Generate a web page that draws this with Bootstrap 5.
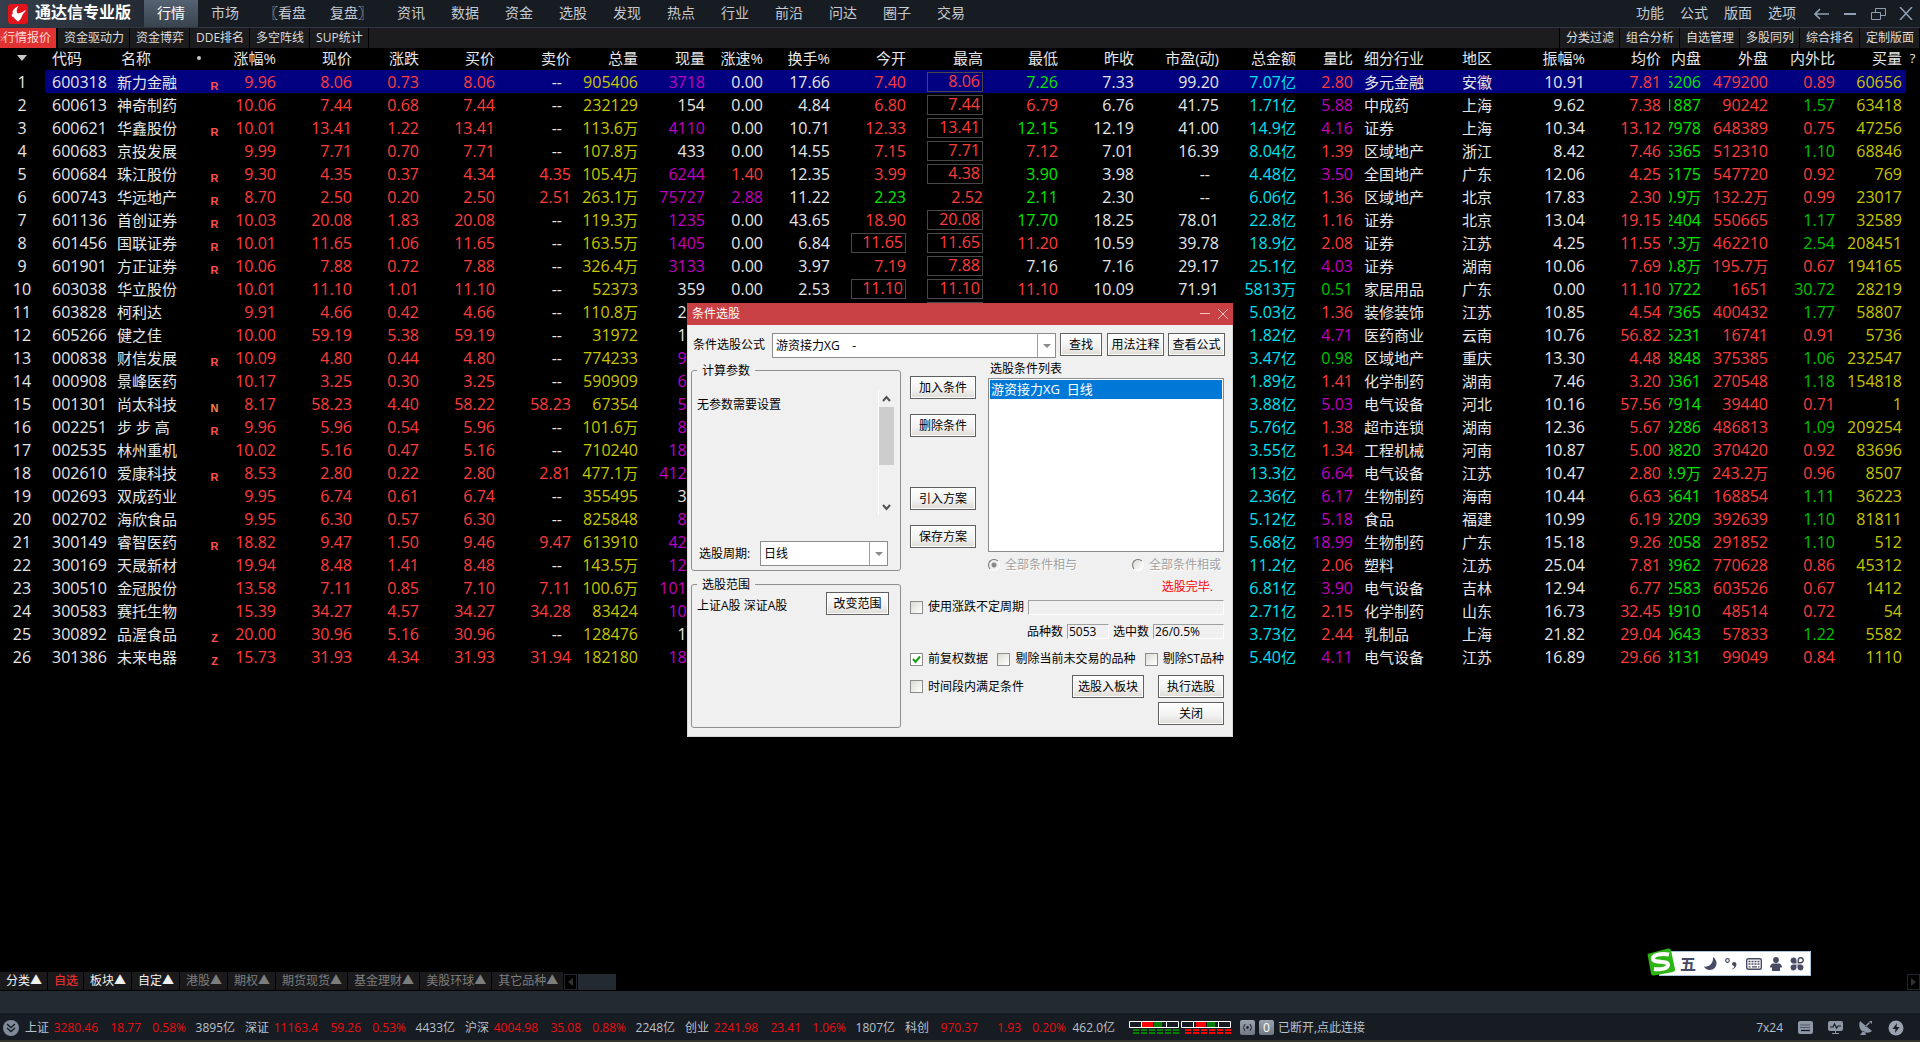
<!DOCTYPE html>
<html lang="zh-CN">
<head>
<meta charset="utf-8">
<meta name="viewport" content="width=device-width, initial-scale=1">
<title>通达信专业版</title>
<link href="https://cdn.jsdelivr.net/npm/bootstrap@5.3.0/dist/css/bootstrap.min.css" rel="stylesheet">
<script src="https://cdn.jsdelivr.net/npm/bootstrap@5.3.0/dist/js/bootstrap.bundle.min.js"></script>
<style>
:root{--up:#ff3c3c;--down:#00e600;--chrome:#171b22;--band:#242a32}
body{background:#000;color:#e6e6e6;font:12px/16px "Open Sans","Noto Sans CJK SC",sans-serif;overflow:hidden}
button,input,select{font:inherit;color:inherit}
svg{display:block;flex:none}

/* title bar */
.topbar{height:28px;background:var(--chrome);border-bottom:1px solid #2f3844;font-size:14px;color:#c4cad2}
.brand{width:144px;padding-left:8px;gap:7px;background:linear-gradient(90deg,#353e4a,#232a33);color:#fff;font-size:16px;font-weight:700}
.brand span{margin-top:-4px}
.menu-link{min-width:54px;padding:0 12px 2px;display:flex;align-items:center;justify-content:center;color:#c4cad2;text-decoration:none;white-space:nowrap}
.menu-link.on{background:linear-gradient(#556272,#39434f);color:#fff}
.menu-end .menu-link{min-width:44px;padding:0 8px 2px}
.winbtn{border:0;background:none;padding:0;width:28px;display:flex;align-items:center;justify-content:center}

/* view tabs */
.viewbar{height:20px;background:#1c1c1e}
.view-link{padding:0 5px 0 6px;border-right:1px solid #000;color:#dcdcdc;text-decoration:none;line-height:20px;white-space:nowrap}
.view-link.on{background:#e03232;color:#ffd9d9;border-right:2px solid #000;padding:0 5px 0 0}
.view-first{border-left:1px solid #000}
.chev{margin-right:-3px;opacity:.45}

/* quotes */
.quotes{width:100%;table-layout:fixed;border-collapse:collapse;font-size:16px;line-height:22px;white-space:nowrap}
.quotes td,.quotes th{padding:0 1px 0 0;height:23px;font-weight:400;text-align:right}
.quotes th{font-size:15px;height:22px;line-height:18px;padding-bottom:2px}
.quotes .txt{font-size:15px;text-align:left;padding-left:7px}
.quotes .fs-code{font-size:16px}
.quotes .pad10{padding-left:10px}
.quotes .ctr{text-align:center}
.quotes .help{font-size:13px}
.quotes .cjk{font-size:15px}
.quotes .dash{padding-right:10px}
.quotes .buy{padding-right:4px}
.quotes .flag{font:700 11px/12px "Liberation Sans",sans-serif;color:#ff5050;text-align:center;vertical-align:bottom;padding:0 0 1px 1px}
.quotes .flag.n{color:#ff8040}
.quotes .sel td{background:#000080}
.quotes .sel td:first-child,.quotes .sel td:last-child{background:none}
.inn span{white-space:nowrap}
.inn>span{display:flex;justify-content:flex-end;overflow:hidden;margin-left:7px}
.inn bdi{flex:none}
.limit{display:block;margin-left:20px;border:1px solid #484848;height:20px;line-height:17px;padding-right:2px}
.up{color:var(--up)}.down{color:var(--down)}.dim-down{color:#00c400}.vol{color:#c6c600}.big{color:#c000c0}.amt{color:#00e0f0}

/* bottom */
.sheetbar{height:18px;gap:1px}
.sheet-link{background:#1a1a1c;color:#7d7d7d;padding:0 5px 0 6px;line-height:18px;text-decoration:none;white-space:nowrap}
.sheet-link.w{color:#f0f0f0}
.sheet-link.on{color:#ff3030}
.scrollbtn{width:13px;height:16px;border:1px solid #22262c;background:#000;padding:0;display:flex;align-items:center;justify-content:center}
.scrollthumb{width:38px;height:16px;background:var(--band)}
.band{height:22px;background:var(--band);margin-top:1px}
.status{height:27px;background:var(--chrome);color:#b9c2cc;padding:2px 0 0 3px;white-space:nowrap}
.more{margin-right:6px}
.ix{width:220px;padding-right:10px}
.ix b{font-weight:400;color:#e81010;text-align:right}
.ix .v1,.ix .v4{width:49px;text-align:right}.ix .v2{width:43px}.ix .v3{width:45px}
.tools{gap:15px}
.desk{height:2px;background:#33352a}
.chip{background:linear-gradient(#9aa3af,#6f7884);border-radius:2px;width:15px;height:15px;display:flex;align-items:center;justify-content:center;color:#fff}

/* input-method bar */
.ime{position:absolute;right:109px;bottom:66px;height:25px;width:164px;color:#474b63}
.ime-body{background:#fff;border:1px solid #a9c4dc;margin-left:12px;padding:0 6px 0 20px;font-size:16px}
.ime-logo{position:absolute;left:0;bottom:0}

/* selection dialog */
.dlg{position:absolute;left:0;right:0;top:303px;margin:0 auto;width:546px;background:#f0f0f0;color:#000;border:1px solid #d8d8d8;border-top:0}
.dlg-head{height:22px;margin:0 -1px;background:#c84044;color:#fff;padding:0 5px}
.dlg-head button{border:0;background:none;padding:0}
.dlg-form{padding:8px 7px 8px 3px}
.wbtn{height:23px;border:1px solid #606060;background:linear-gradient(#fff,#f1f1f1 60%,#dedbd4);box-shadow:inset 0 0 0 1px #fff;padding:0;line-height:20px;text-align:center;white-space:nowrap}
.combo{height:25px;border:1px solid #8c8c8c;background:#fff;position:relative}
.combo select{appearance:none;border:0;background:none;width:100%;height:23px;padding:0 20px 0 3px;outline:0}
.combo i{position:absolute;right:0;top:0;bottom:0;width:18px;border-left:1px solid #a0a0a0;pointer-events:none;display:flex;align-items:center;justify-content:center}
.combo i::after{content:"";border:4px solid transparent;border-top-color:#8a8a8a;border-bottom:0}
.combo-f{width:284px;margin-right:4px}
.combo-p{width:128px}
.f-label{padding:4px 0 0 2px}
.bt-a{width:42px;margin-right:5px}.bt-b{width:57px;margin-right:4px}.bt-c{width:57px}
.cols-gap{gap:9px}
.left-col{padding-top:4px}
.right-col{margin-right:1px}
.grp{border:1px solid #909090;border-radius:3px;width:210px;margin:0;padding:0;position:relative}
.grp-name{position:absolute;left:5px;top:-8px;background:#f0f0f0;padding:0 5px;line-height:16px}
.g-one{height:201px;margin-bottom:13px;padding:19px 6px 0 5px}
.g-two{height:144px;padding:7px 11px 0 5px}
.scope span{padding-top:5px}
.sb{width:16px;border-left:1px solid #fff;height:125px}
.sb div{background:#cdcdcd;height:58px}
.pt-note{padding-top:7px}
.per-row{margin:26px 6px 0 2px}
.bt-r{width:63px}
.w-mid{width:66px}
.mid-col{gap:15px;padding-top:10px}.gap-top{margin-top:35px}
.pick-col{width:236px;margin-top:-5px}
.pick-name{padding-left:2px}
.pick{height:174px;border:1px solid #8c8c8c;background:#fff;padding:1px;list-style:none;margin:1px 0 0}
.pick li{background:#0078d7;color:#fff;font-size:13px;line-height:19px;padding-left:1px;white-space:pre}
.radios{padding:5px 3px 0 0}.done{color:#f00;padding:6px 11px 0 0}
.r1{height:14px;margin-top:5px}.r2{height:15px;margin-top:10px}.r3{height:16px;margin-top:12px}.r4{height:23px;margin:8px 0 4px}
.s-a{width:42px;margin-right:4px}.s-b{width:71px}
.bt-s{width:72px;margin-right:14px}
.chk{display:flex;align-items:center;gap:5px;white-space:nowrap}
.chk input{appearance:none;margin:0;width:13px;height:13px;border:1px solid #8c8c8c;background:linear-gradient(135deg,#dcdcd4,#fff)}
.chk input[type=radio]{border-radius:50%;width:12px;height:12px;border-color:#707070 #fff #fff #707070}
.chk input[type=radio]:checked{background:radial-gradient(circle,#888 0 2px,#f0f0f0 3px)}
.chk input[type=checkbox]:checked{background:#fff url("data:image/svg+xml,%3Csvg xmlns='http://www.w3.org/2000/svg' viewBox='0 0 11 11'%3E%3Cpath d='M2 5l2.5 3L9 2.5' fill='none' stroke='%231a9a1a' stroke-width='2'/%3E%3C/svg%3E")}
.off{color:#a0a0a0;text-shadow:1px 1px 0 #fff}
.sunk{border:1px solid #a0a0a0;border-color:#a0a0a0 #fff #fff #a0a0a0;background:#f0f0f0;height:15px;line-height:13px;padding:0 1px;min-width:0}
</style>
</head>
<body class="vh-100 d-flex flex-column position-relative">

<header class="topbar d-flex">
  <div class="brand d-flex align-items-center">
    <svg width="20" height="20" viewBox="0 0 20 20"><rect width="20" height="20" rx="3" fill="#e0141a"/><path d="M10.500 2C6 4 3.500 7.500 5 9.500c-2 1-1.500 3.500.500 3.500 2 3 6 5.500 4.500 4.500 4-3 3.500-5 5-7.500 1.500-2 2.500-2 2.500-4C15 8 13 9 10 9.500 8 8.500 8.500 5 10.500 2z" fill="#fff"/></svg>
    <span>通达信专业版</span>
  </div>
  <nav class="d-flex" id="menu"></nav>
  <nav class="d-flex ms-auto me-1 menu-end" id="menuEnd"></nav>
  <div class="d-flex">
    <button class="winbtn" aria-label="后退"><svg width="16" height="12" viewBox="0 0 16 12" fill="none" stroke="#8fa0b4" stroke-width="1.600"><path d="M1 6h14M6 1L1 6l5 5"/></svg></button>
    <button class="winbtn" aria-label="最小化"><svg width="12" height="12" stroke="#8fa0b4" stroke-width="2"><path d="M0 6h12"/></svg></button>
    <button class="winbtn" aria-label="还原"><svg width="15" height="12" fill="none" stroke="#8fa0b4"><path d="M4.500 4V.500h10v7H10M.500 4.500h9v7h-9z"/></svg></button>
    <button class="winbtn" aria-label="关闭窗口"><svg width="14" height="13" stroke="#8fa0b4" stroke-width="1.500"><path d="M1 0l12 13M13 0L1 13"/></svg></button>
  </div>
</header>

<nav class="viewbar d-flex">
  <a href="#" class="view-link on"><span class="chev">»</span>行情报价</a>
  <a href="#" class="view-link">资金驱动力</a><a href="#" class="view-link">资金博弈</a><a href="#" class="view-link">DDE排名</a><a href="#" class="view-link">多空阵线</a><a href="#" class="view-link">SUP统计</a>
  <a href="#" class="view-link view-first ms-auto">分类过滤</a><a href="#" class="view-link">组合分析</a><a href="#" class="view-link">自选管理</a><a href="#" class="view-link">多股同列</a><a href="#" class="view-link">综合排名</a><a href="#" class="view-link">定制版面</a>
</nav>

<main class="flex-grow-1 overflow-hidden">
  <table class="quotes"><colgroup id="cols"></colgroup><thead><tr id="head"></tr></thead><tbody id="rows"></tbody></table>
</main>

<nav class="sheetbar d-flex">
  <a href="#" class="sheet-link w">分类▲</a><a href="#" class="sheet-link on">自选</a><a href="#" class="sheet-link w">板块▲</a><a href="#" class="sheet-link w">自定▲</a><a href="#" class="sheet-link">港股▲</a><a href="#" class="sheet-link">期权▲</a><a href="#" class="sheet-link">期货现货▲</a><a href="#" class="sheet-link">基金理财▲</a><a href="#" class="sheet-link">美股环球▲</a><a href="#" class="sheet-link">其它品种▲</a>
  <button class="scrollbtn mt-auto" aria-label="向左"><svg width="5" height="8"><path d="M5 0v8L0 4z" fill="#333"/></svg></button>
  <div class="scrollthumb mt-auto"></div>
  <button class="scrollbtn mt-auto ms-auto" aria-label="向右"><svg width="5" height="8"><path d="M0 0v8l5-4z" fill="#333"/></svg></button>
</nav>
<div class="band"></div>
<footer class="status d-flex align-items-center">
  <svg width="16" height="16" class="more"><circle cx="8" cy="8" r="8" fill="#7f8b9b"/><path d="M4 4l4 3.500L12 4M4 8l4 3.500L12 8" fill="none" stroke="#171b22" stroke-width="1.400"/></svg>
  <div class="d-flex" id="indices"></div>
  <svg width="103" height="16" class="ms-1" id="meter"></svg>
  <span class="chip ms-2"><svg width="11" height="9" fill="none" stroke="#20262e"><circle cx="5.500" cy="4.500" r="1" fill="#20262e"/><path d="M3 1Q0 4.500 3 8M8 1q3 3.500 0 7"/></svg></span>
  <span class="chip ms-1 me-1">0</span>
  <a href="#" class="text-reset text-decoration-none">已断开,点此连接</a>
  <div class="d-flex align-items-center ms-auto pe-3 tools">
    <span>7x24</span>
    <svg width="15" height="13" viewBox="0 0 15 13"><rect width="15" height="13" rx="2" fill="#8d97a6"/><path d="M2.500 4h10M2.500 6.500h10" stroke="#171b22" stroke-dasharray="1 1"/><path d="M3 9.500h9" stroke="#171b22" stroke-width="1.300"/></svg>
    <svg width="15" height="13" viewBox="0 0 15 13"><rect width="15" height="10" rx="2" fill="#8d97a6"/><path d="M2 6h3l1.500-3 2 4L10 5h3" fill="none" stroke="#171b22" stroke-width="1.200"/><path d="M4 12.500h7M7.500 10v2" stroke="#8d97a6"/></svg>
    <svg width="15" height="16" viewBox="0 0 15 16"><path d="M2 1c-2 5 0 11 6 11.500 3 .500 5-.500 6-1.500zM7 6l4-4 1 1-4 4zM11 1h3v3zM2 15l3-4 2 1 1 3z" fill="#8d97a6"/></svg>
    <svg width="16" height="16"><circle cx="8" cy="8" r="7.500" fill="#9aa2b0"/><path d="M9 3L4.500 9H7.500L7 13l4.500-6H8.500z" fill="#171b22"/></svg>
  </div>
</footer>
<div class="desk"></div>

<div class="ime d-flex">
  <div class="ime-body d-flex align-items-center justify-content-between flex-grow-1 fw-bold">
    <span>五</span>
    <svg width="13" height="13"><path d="M9 0c6 4 4 13-3.500 13C3 13 1 11.500 0 9.500 6 10.500 9.500 6 9 0z" fill="#474b63"/></svg>
    <svg width="13" height="13"><circle cx="2.500" cy="3.500" r="1.800" fill="none" stroke="#474b63" stroke-width="1.200"/><path d="M7 12c2-1 2.500-2 2-3C6.500 8.500 6.500 5 9 5c4 0 3 6-2 7.500z" fill="#474b63"/></svg>
    <svg width="16" height="12"><rect x=".7" y=".7" width="14.600" height="10.600" rx="1.500" fill="none" stroke="#474b63" stroke-width="1.400"/><path d="M2.500 3.500h11M2.500 6h11" stroke="#474b63" stroke-width="1.500" stroke-dasharray="2 1"/><path d="M2.500 8.800h2M6 8.800h5M12 8.800h1.500" stroke="#474b63" stroke-width="1.300"/></svg>
    <svg width="12" height="14"><circle cx="6" cy="3" r="2.900" fill="#474b63"/><path d="M3 6.500h6c1.500 0 3 2 3 4H10V14H2v-3.500H0c0-2 1.500-4 3-4z" fill="#474b63"/></svg>
    <svg width="14" height="14" fill="#474b63"><path d="M6.500 6.500H3A3 3 0 1 1 6.500 3zM6.500 7.500H3A3 3 0 1 0 6.500 11zM7.500 7.500H11A3 3 0 1 1 7.500 11z"/><path d="M8.200 5.800V3.200a2.500 2.500 0 1 1 2.500 2.600z" fill="none" stroke="#474b63" stroke-width="1.400"/></svg>
  </div>
  <svg class="ime-logo" width="28" height="28" viewBox="0 0 28 28"><path d="M.5 6L21 .5c2 0 2.500.5 3 2L28 21c0 2-1 2.500-2 3L7 27.500c-2 0-2.500-.5-3-2z" fill="#2fb416"/><path d="M22 6.500C14 5 5.500 7 6 11c.500 4 14.500 1.500 15 5.500.500 4-7 5.500-14 4.500" fill="none" stroke="#fff" stroke-width="4"/></svg>
</div>

<section class="dlg" role="dialog" aria-label="条件选股">
  <div class="dlg-head d-flex align-items-center">
    <span class="me-auto">条件选股</span>
    <button class="me-2" aria-label="最小化对话框"><svg width="10" height="10" stroke="#f3c4c4"><path d="M0 4.500h10"/></svg></button>
    <button aria-label="关闭对话框"><svg width="10" height="10" stroke="#f3c4c4"><path d="M0 0l10 10M10 0L0 10"/></svg></button>
  </div>
  <div class="dlg-form">
    <div class="d-flex align-items-start mb-2">
      <label for="formula" class="flex-grow-1 text-nowrap f-label">条件选股公式</label>
      <div class="combo combo-f"><select id="formula"><option>游资接力XG &nbsp;&nbsp; -</option></select><i></i></div>
      <button class="wbtn bt-a">查找</button>
      <button class="wbtn bt-b">用法注释</button>
      <button class="wbtn bt-c">查看公式</button>
    </div>
    <div class="d-flex cols-gap">
      <div class="d-flex flex-column left-col">
        <fieldset class="grp g-one"><div class="grp-name">计算参数</div>
          <div class="d-flex justify-content-between">
            <span class="pt-note">无参数需要设置</span>
            <div class="sb d-flex flex-column align-items-stretch">
              <svg width="15" height="17"><path d="M4 11l3.500-4L11 11" fill="none" stroke="#505050" stroke-width="2"/></svg>
              <div></div>
              <svg width="15" height="17" class="mt-auto"><path d="M4 7l3.500 4L11 7" fill="none" stroke="#505050" stroke-width="2"/></svg>
            </div>
          </div>
          <div class="d-flex align-items-center justify-content-between per-row">
            <label for="period">选股周期:</label>
            <div class="combo combo-p"><select id="period"><option>日线</option></select><i></i></div>
          </div>
        </fieldset>
        <fieldset class="grp g-two"><div class="grp-name">选股范围</div>
          <div class="d-flex align-items-center justify-content-between scope"><span>上证A股 深证A股</span><button class="wbtn bt-r">改变范围</button></div>
        </fieldset>
      </div>
      <div class="flex-grow-1 d-flex flex-column right-col">
        <div class="d-flex justify-content-between">
          <div class="d-flex flex-column mid-col">
            <button class="wbtn w-mid">加入条件</button>
            <button class="wbtn w-mid">删除条件</button>
            <button class="wbtn w-mid gap-top">引入方案</button>
            <button class="wbtn w-mid">保存方案</button>
          </div>
          <div class="pick-col">
            <div class="pick-name">选股条件列表</div>
            <ul class="pick"><li>游资接力XG  日线</li></ul>
            <div class="d-flex justify-content-between radios">
              <label class="chk off"><input type="radio" name="mode" checked disabled>全部条件相与</label>
              <label class="chk off"><input type="radio" name="mode" disabled>全部条件相或</label>
            </div>
            <div class="text-end done">选股完毕.</div>
          </div>
        </div>
        <div class="d-flex align-items-center r1">
          <label class="chk"><input type="checkbox">使用涨跌不定周期</label>
          <input class="sunk flex-grow-1 ms-1" aria-label="周期区间" readonly>
        </div>
        <div class="d-flex align-items-center justify-content-end r2">
          <label for="total" class="me-1">品种数</label><input id="total" class="sunk s-a" value="5053" readonly>
          <label for="hits" class="me-1">选中数</label><input id="hits" class="sunk s-b" value="26/0.5%" readonly>
        </div>
        <div class="d-flex align-items-center justify-content-between r3">
          <label class="chk"><input type="checkbox" checked>前复权数据</label>
          <label class="chk"><input type="checkbox">剔除当前未交易的品种</label>
          <label class="chk"><input type="checkbox">剔除ST品种</label>
        </div>
        <div class="d-flex align-items-center justify-content-between r4">
          <label class="chk me-auto"><input type="checkbox">时间段内满足条件</label>
          <button class="wbtn bt-s">选股入板块</button>
          <button class="wbtn w-mid">执行选股</button>
        </div>
        <div class="text-end"><button class="wbtn w-mid d-inline-block">关闭</button></div>
      </div>
    </div>
  </div>
</section>

<script>
const links=(names,on)=>names.split(' ').map(t=>`<a href="#" class="menu-link${t===on?' on':''}">${t}</a>`).join('');
menu.innerHTML=links('行情 市场 〖看盘 复盘〗 资讯 数据 资金 选股 发现 热点 行业 前沿 问达 圈子 交易','行情');
menuEnd.innerHTML=links('功能 公式 版面 选项');

const widths=[45,65,97,14,56,76,67,76,76,67,67,58,67,76,77,75,76,85,77,57,98,58,76,76,40,67,67,70,14];
cols.innerHTML=widths.map(w=>`<col style="width:${w}px">`).join('');
const heads=['','代码','名称','','涨幅%','现价','涨跌','买价','卖价','总量','现量','涨速%','换手%','今开','最高','最低','昨收','市盈(动)','总金额','量比','细分行业','地区','振幅%','均价','内盘','外盘','内外比','买量','?'];
head.innerHTML=heads.map((h,i)=>{
  const c=i===28?'ctr help':i===1||i===2?'txt':i===20||i===21?'txt pad10':i===27?'buy':'';
  if(i===0)h='<svg class="mx-auto" width="10" height="6"><path d="M0 0h10L5 6z" fill="#c8c8c8"/></svg>';
  if(i===2)h='<div class="d-flex align-items-center justify-content-between pe-1 ps-1"><span>名称</span><svg width="6" height="6"><circle cx="3" cy="3" r="2" fill="#c8c8c8"/></svg></div>';
  return `<th class="${c}">${h}</th>`}).join('');

const data=`600318 新力金融 R 9.96 8.06 0.73 8.06 -- 905406 3718 0.00 17.66 7.40 8.06 7.26 7.33 99.20 7.07亿 2.80 多元金融 安徽 10.91 7.81 5206 479200 0.89 60656
600613 神奇制药 . 10.06 7.44 0.68 7.44 -- 232129 154 0.00 4.84 6.80 7.44 6.79 6.76 41.75 1.71亿 5.88 中成药 上海 9.62 7.38 1887 90242 1.57 63418
600621 华鑫股份 R 10.01 13.41 1.22 13.41 -- 113.6万 4110 0.00 10.71 12.33 13.41 12.15 12.19 41.00 14.9亿 4.16 证券 上海 10.34 13.12 7978 648389 0.75 47256
600683 京投发展 . 9.99 7.71 0.70 7.71 -- 107.8万 433 0.00 14.55 7.15 7.71 7.12 7.01 16.39 8.04亿 1.39 区域地产 浙江 8.42 7.46 5365 512310 1.10 68846
600684 珠江股份 R 9.30 4.35 0.37 4.34 4.35 105.4万 6244 1.40 12.35 3.99 4.38 3.90 3.98 -- 4.48亿 3.50 全国地产 广东 12.06 4.25 5175 547720 0.92 769
600743 华远地产 R 8.70 2.50 0.20 2.50 2.51 263.1万 75727 2.88 11.22 2.23 2.52 2.11 2.30 -- 6.06亿 1.36 区域地产 北京 17.83 2.30 0.9万 132.2万 0.99 23017
601136 首创证券 R 10.03 20.08 1.83 20.08 -- 119.3万 1235 0.00 43.65 18.90 20.08 17.70 18.25 78.01 22.8亿 1.16 证券 北京 13.04 19.15 2404 550665 1.17 32589
601456 国联证券 R 10.01 11.65 1.06 11.65 -- 163.5万 1405 0.00 6.84 11.65 11.65 11.20 10.59 39.78 18.9亿 2.08 证券 江苏 4.25 11.55 7.3万 462210 2.54 208451
601901 方正证券 R 10.06 7.88 0.72 7.88 -- 326.4万 3133 0.00 3.97 7.19 7.88 7.16 7.16 29.17 25.1亿 4.03 证券 湖南 10.06 7.69 0.8万 195.7万 0.67 194165
603038 华立股份 . 10.01 11.10 1.01 11.10 -- 52373 359 0.00 2.53 11.10 11.10 11.10 10.09 71.91 5813万 0.51 家居用品 广东 0.00 11.10 0722 1651 30.72 28219
603828 柯利达 . 9.91 4.66 0.42 4.66 -- 110.8万 200 . . . 4.66 . 4.24 . 5.03亿 1.36 装修装饰 江苏 10.85 4.54 7365 400432 1.77 58807
605266 健之佳 . 10.00 59.19 5.38 59.19 -- 31972 100 . . . . . . . 1.82亿 4.71 医药商业 云南 10.76 56.82 5231 16741 0.91 5736
000838 财信发展 R 10.09 4.80 0.44 4.80 -- 774233 900 . . . . . . . 3.47亿 0.98 区域地产 重庆 13.30 4.48 3848 375385 1.06 232547
000908 景峰医药 . 10.17 3.25 0.30 3.25 -- 590909 600 . . . . . . . 1.89亿 1.41 化学制药 湖南 7.46 3.20 0361 270548 1.18 154818
001301 尚太科技 N 8.17 58.23 4.40 58.22 58.23 67354 500 . . . . . . . 3.88亿 5.03 电气设备 河北 10.16 57.56 7914 39440 0.71 1
002251 步_步_高 R 9.96 5.96 0.54 5.96 -- 101.6万 800 . . . . . . . 5.76亿 1.38 超市连锁 湖南 12.36 5.67 9286 486813 1.09 209254
002535 林州重机 . 10.02 5.16 0.47 5.16 -- 710240 1800 . . . . . . . 3.55亿 1.34 工程机械 河南 10.87 5.00 9820 370420 0.92 83696
002610 爱康科技 R 8.53 2.80 0.22 2.80 2.81 477.1万 41200 . . . . . . . 13.3亿 6.64 电气设备 江苏 10.47 2.80 3.9万 243.2万 0.96 8507
002693 双成药业 . 9.95 6.74 0.61 6.74 -- 355495 300 . . . . . . . 2.36亿 6.17 生物制药 海南 10.44 6.63 5641 168854 1.11 36223
002702 海欣食品 . 9.95 6.30 0.57 6.30 -- 825848 800 . . . . . . . 5.12亿 5.18 食品 福建 10.99 6.19 3209 392639 1.10 81811
300149 睿智医药 R 18.82 9.47 1.50 9.46 9.47 613910 4200 . . . . . . . 5.68亿 18.99 生物制药 广东 15.18 9.26 2058 291852 1.10 512
300169 天晟新材 . 19.94 8.48 1.41 8.48 -- 143.5万 1200 . . . . . . . 11.2亿 2.06 塑料 江苏 25.04 7.81 3962 770628 0.86 45312
300510 金冠股份 . 13.58 7.11 0.85 7.10 7.11 100.6万 10100 . . . . . . . 6.81亿 3.90 电气设备 吉林 12.94 6.77 2583 603526 0.67 1412
300583 赛托生物 . 15.39 34.27 4.57 34.27 34.28 83424 1000 . . . . . . . 2.71亿 2.15 化学制药 山东 16.73 32.45 4910 48514 0.72 54
300892 品渥食品 Z 20.00 30.96 5.16 30.96 -- 128476 100 . . . . . . . 3.73亿 2.44 乳制品 上海 21.82 29.04 0643 57833 1.22 5582
301386 未来电器 Z 15.73 31.93 4.34 31.93 31.94 182180 1800 . . . . . . . 5.40亿 4.11 电气设备 江苏 16.89 29.66 3131 99049 0.84 1110`.split('\n');

// colour of a value follows its column and, for open/high/low, the previous close
function cell(v,i,prev){
  if(v==='.')return '<td></td>';
  if(v==='--')return '<td class="dash">--</td>';
  const n=parseFloat(v);let c='';
  if([3,4,5,6,7,22,24].includes(i))c='up';
  else if(i===8)c='vol';
  else if(i===26)c='vol buy';
  else if(i===9)c=n>=500?'big':'';
  else if(i===10)c=n>=2?'big':n>0?'up':'';
  else if(i>=12&&i<=14)c=n>prev?'up':n<prev?'down':'';
  else if(i===17)c='amt';
  else if(i===18)c=n>=3?'big':n<1?'dim-down':'up';
  else if(i===23)c='down inn';
  else if(i===25)c=n>1?'dim-down':'up';
  if(i===0)c='txt fs-code';
  if(i===1){c='txt';v=v.replace(/_/g,'&nbsp;')}
  if(i===2)c='flag'+(v==='N'?' n':'');
  if(i===19||i===20)c='txt pad10';
  v=v.replace(/[万亿]$/,m=>`<span class="cjk">${m}</span>`);
  if((i===12||i===13)&&n===Math.round(prev*110)/100)v=`<span class="limit">${v}</span>`;
  if(i===23)v=`<span><bdi>${v}</bdi></span>`;
  return `<td class="${c}">${v}</td>`;
}
rows.innerHTML=data.map((line,r)=>{
  const f=line.split(' '),prev=parseFloat(f[15]);
  return `<tr class="${r?'':'sel'}"><td class="ctr">${r+1}</td>${f.map((v,i)=>cell(v,i,prev)).join('')}<td></td></tr>`}).join('');

indices.innerHTML=['上证 3280.46 18.77 0.58% 3895亿','深证 11163.4 59.26 0.53% 4433亿','沪深 4004.98 35.08 0.88% 2248亿','创业 2241.98 23.41 1.06% 1807亿','科创 970.37 1.93 0.20% 462.0亿'].map(s=>{
  const f=s.split(' ');return `<div class="ix d-flex"><span>${f[0]}</span><b class="v1">${f[1]}</b><b class="v2">${f[2]}</b><b class="v3">${f[3]}</b><span class="v4">${f[4]}</span></div>`}).join('');

let m='';
[[0,'#008000',13,24],[52,'#f00',15,25]].forEach(([x,c,a,b])=>{
  m+=`<path fill="none" stroke="#fff" d="M${x+.5} 1.500h49v6h-49zM${x+12.5} 1.500v6M${x+37.5} 1.500v6"/><path fill="#f00" d="M${x+a} 2h${b-a}v5h-${b-a}z"/><path fill="#008000" d="M${x+b+1} 2h8v5h-8z"/>`;
  for(let k=0;k<6;k++)m+=`<path fill="${c}" d="M${x+4+k*8} 9h6v2h-6zM${x+4+k*8} 12h6v2h-6z"/>`;
});
meter.innerHTML=m;
</script>
</body>
</html>
